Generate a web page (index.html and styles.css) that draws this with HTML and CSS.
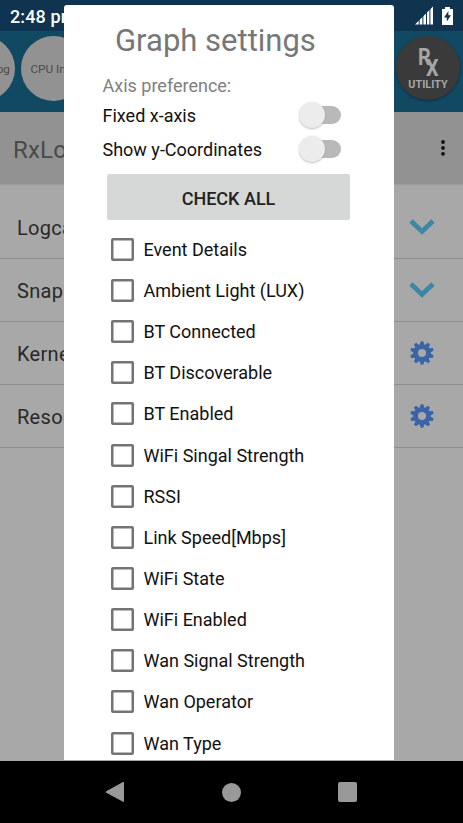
FILE: index.html
```html
<!DOCTYPE html>
<html lang="en">
<head>
<meta charset="utf-8">
<title>Graph settings</title>
<link rel="stylesheet" href="styles.css">
</head>
<body>
<svg width="0" height="0" class="defs">
  <symbol id="chevron" viewBox="0 0 26 17"><path d="M2 2 13 12.5 24 2" fill="none" stroke="#3c87a6" stroke-width="4.8"/></symbol>
  <symbol id="gear" viewBox="-12 -12 24 24">
    <circle r="6.4" fill="none" stroke="#3a64a6" stroke-width="4.8"/>
    <g fill="#3a64a6">
      <path id="t" d="M-2.4-8 -1.3-11.8H1.3L2.4-8Z"/>
      <use href="#t" transform="rotate(36)"/><use href="#t" transform="rotate(72)"/><use href="#t" transform="rotate(108)"/><use href="#t" transform="rotate(144)"/><use href="#t" transform="rotate(180)"/><use href="#t" transform="rotate(216)"/><use href="#t" transform="rotate(252)"/><use href="#t" transform="rotate(288)"/><use href="#t" transform="rotate(324)"/>
    </g>
  </symbol>
</svg>
<div class="screen">
  <div class="status">
    <span class="time">2:48 pm</span>
    <svg class="signal" width="19" height="19" viewBox="0 0 19 19"><path d="M0 18.5 18 0.5V18.5Z" fill="#fff"/><path d="M4.2 0V19M7.9 0V19M11.5 0V19M14.9 0V19" stroke="#10344f" stroke-width="1"/></svg>
    <svg class="battery" width="11" height="18" viewBox="0 0 11 18"><path d="M3 0H8V2H11V18H0V2H3Z" fill="#fff"/><path d="M6.4 4 2 10.5H4.8V14.5L9 8.3H6.4Z" fill="#10344f"/></svg>
  </div>
  <header class="tabs">
    <div class="tab first">Log</div>
    <div class="tab second">CPU Info</div>
    <div class="logo"><div class="rx"><b>R</b><b class="x">X</b></div><span>UTILITY</span></div>
  </header>
  <div class="titlebar"><h1>RxLogger</h1><svg width="6" height="18" viewBox="0 0 6 18" fill="#101010"><circle cx="3" cy="3" r="1.9"/><circle cx="3" cy="8.9" r="1.9"/><circle cx="3" cy="14.8" r="1.9"/></svg></div>
  <main class="list">
    <div class="row"><span>Logcat</span><svg class="chev"><use href="#chevron"/></svg></div>
    <div class="row"><span>Snapshot</span><svg class="chev"><use href="#chevron"/></svg></div>
    <div class="row"><span>Kernel</span><svg class="gear"><use href="#gear"/></svg></div>
    <div class="row"><span>Resource</span><svg class="gear"><use href="#gear"/></svg></div>
  </main>
  <nav class="nav">
    <svg width="20" height="22" viewBox="0 0 20 22"><path d="M1.2 10.2 18 1Q19 .6 19 1.6V20.2Q19 21.2 18 20.7L1.2 11.7Q.2 11 1.2 10.2Z" fill="#999"/></svg>
    <i class="home"></i>
    <i class="recent"></i>
  </nav>
</div>
<section class="dialog">
  <h2>Graph settings</h2>
  <p class="label">Axis preference:</p>
  <div class="option"><span>Fixed x-axis</span><i class="switch"></i></div>
  <div class="option"><span>Show y-Coordinates</span><i class="switch"></i></div>
  <button>CHECK ALL</button>
  <ul>
    <li><i></i>Event Details</li>
    <li><i></i>Ambient Light (LUX)</li>
    <li><i></i>BT Connected</li>
    <li><i></i>BT Discoverable</li>
    <li><i></i>BT Enabled</li>
    <li><i></i>WiFi Singal Strength</li>
    <li><i></i>RSSI</li>
    <li><i></i>Link Speed[Mbps]</li>
    <li><i></i>WiFi State</li>
    <li><i></i>WiFi Enabled</li>
    <li><i></i>Wan Signal Strength</li>
    <li><i></i>Wan Operator</li>
    <li><i></i>Wan Type</li>
  </ul>
</section>
</body>
</html>
```
FILE: styles.css
```css
* { box-sizing: border-box; }
body { margin: 0; width: 463px; height: 823px; overflow: hidden; font-family: Roboto, "Liberation Sans", sans-serif; }
h1, h2, p, ul { margin: 0; padding: 0; font-weight: 400; }
.defs { position: absolute; }
.screen { display: flex; flex-direction: column; height: 823px; background: #a8a8a8; }
.status { height: 31px; background: #10344f; display: flex; align-items: flex-start; padding: 7px 10px 0 10px; }
.time { color: #fff; font-size: 18px; font-weight: 500; line-height: 19px; letter-spacing: 0.1px; }
.signal { margin: -1px 8px 0 auto; }
.battery { flex: none; }
.tabs { height: 81px; background: #114862; display: flex; padding-top: 5px; overflow: hidden; }
.tab { flex: none; width: 65px; height: 65px; border-radius: 50%; background: #929292; color: #4c4c4c; font-size: 11.8px; line-height: 67px; text-align: center; white-space: nowrap; }
.first { margin-left: -50px; text-align: right; padding-right: 5px; }
.second { margin-left: 6px; }
.logo { width: 64px; height: 64px; border-radius: 50%; background: #3a3a3a; margin-left: auto; margin-right: 3px; color: #a6a6a6; text-align: center; box-shadow: 0 1px 2px #0b2f40; }
.rx { height: 43px; padding-top: 10px; font-size: 23px; line-height: 24px; display: flex; justify-content: center; }
.rx b { transform: scaleX(.86); font-weight: 700; }
.rx .x { margin: 11px 0 0 -6.5px; }
.logo span { display: block; font-size: 10.8px; font-weight: 700; line-height: 12px; }
.titlebar { height: 73px; background: #929292; border-bottom: 1px solid #9d9d9d; display: flex; justify-content: space-between; align-items: center; padding: 0 17px 0 13px; }
h1 { font-size: 24px; color: #4a4a4a; padding-top: 3px; letter-spacing: 0.2px; }
.list { flex: 1; padding-top: 11px; }
.row { height: 63px; border-bottom: 1px solid #8e8e8e; display: flex; justify-content: space-between; align-items: center; padding: 0 29px 0 17px; font-size: 20px; color: #292929; letter-spacing: 0.3px; }
.row span { padding-top: 2px; }
.chev { width: 26px; height: 17px; margin-right: -1px; }
.gear { width: 24px; height: 24px; }
.nav { height: 62px; background: #000; display: flex; align-items: center; justify-content: space-between; padding: 0 106px 0 105px; }
.home { width: 19px; height: 19px; border-radius: 50%; background: #999; }
.recent { width: 19px; height: 20px; border-radius: 2px; background: #999; }
.dialog { position: absolute; left: 64px; top: 5px; width: 329.5px; height: 755px; background: #fff; border-radius: 3px 3px 0 0; overflow: hidden; padding: 18px 43.5px 0 38.5px; font-size: 18px; color: #111; }
h2 { font-size: 31px; line-height: 36px; color: #777; margin-left: 12.5px; white-space: nowrap; }
.label { color: #808080; line-height: 22px; margin-top: 16px; }
.option { height: 34.5px; display: flex; justify-content: space-between; align-items: center; }
.option span { padding-top: 1px; }
.label + .option { margin-top: 0.5px; }
.switch { display: block; position: relative; width: 38px; height: 18px; margin-right: 9.5px; border-radius: 9px; background: #b9b9b9; }
.switch::before { content: ""; position: absolute; left: -3.5px; top: -4px; width: 26px; height: 26px; border-radius: 50%; background: #ececec; box-shadow: 0 1px 2px #8888; }
button { display: block; width: 243px; height: 46.5px; margin: 7px 0 0 4.5px; padding: 3px 0 0; background: #d6d8d7; border: 0; border-radius: 2px; font: 500 18px Roboto, sans-serif; color: #222; }
ul { list-style: none; margin-top: 8.7px; }
li { height: 41.17px; display: flex; align-items: center; padding-left: 8.5px; white-space: nowrap; }
li i { width: 23px; height: 23px; border: 2px solid #747474; border-radius: 2px; margin-right: 9.5px; box-shadow: inset 0 0 0 0.5px #747474; }
```
